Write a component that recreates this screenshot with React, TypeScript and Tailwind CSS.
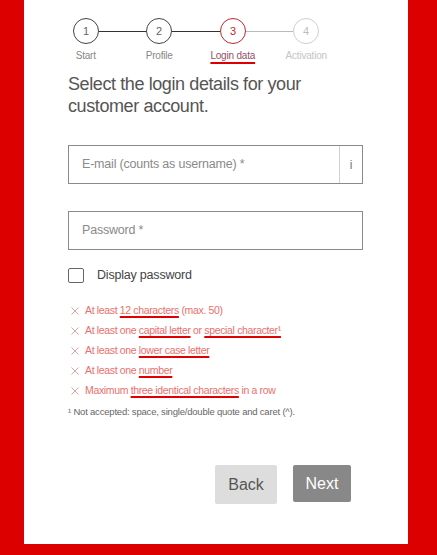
import React from "react";

const steps = [
  { n: "1", label: "Start", state: "done" },
  { n: "2", label: "Profile", state: "done" },
  { n: "3", label: "Login data", state: "active" },
  { n: "4", label: "Activation", state: "todo" },
];

function Circle({ n, state }: { n: string; state: string }) {
  const cls =
    state === "active"
      ? "border-[#c0262c] text-[#c0262c]"
      : state === "todo"
      ? "border-[#cfcfcf] text-[#bdbdbd]"
      : "border-[#444] text-[#666]";
  return (
    <div
      className={`w-[26px] h-[26px] rounded-full border-[1.5px] flex items-center justify-center text-[11px] shrink-0 ${cls}`}
    >
      {n}
    </div>
  );
}

function Link({ children }: { children: React.ReactNode }) {
  return (
    <span className="underline decoration-[#e00000] decoration-[1.5px] underline-offset-[2px]">
      {children}
    </span>
  );
}

function Rule({ children }: { children: React.ReactNode }) {
  return (
    <div className="flex items-center h-[20px]">
      <svg width="8" height="8" viewBox="0 0 8 8" className="ml-[1px] mr-[6px] shrink-0">
        <path d="M0.5 0.5 L7.5 7.5 M7.5 0.5 L0.5 7.5" stroke="#e3a3a3" strokeWidth="1" />
      </svg>
      <span className="text-[#e9706e] text-[10.5px] tracking-[-0.35px]">{children}</span>
    </div>
  );
}

export default function App() {
  return (
    <div
      className="w-[437px] h-[555px] bg-[#dd0000] overflow-hidden"
      style={{ fontFamily: '"Liberation Sans", Arial, sans-serif' }}
    >
      <div className="ml-[24px] w-[384px] h-[544px] bg-white pl-[44px] pr-[45px] pt-[18px]">
        {/* stepper */}
        <div className="flex items-center ml-[5px]">
          <Circle n="1" state="done" />
          <div className="w-[47px] h-px bg-[#333]" />
          <Circle n="2" state="done" />
          <div className="w-[48px] h-px bg-[#333]" />
          <Circle n="3" state="active" />
          <div className="w-[47px] h-px bg-[#bbb]" />
          <Circle n="4" state="todo" />
        </div>
        <div className="flex -ml-[19px] mt-[5px] text-[10px] leading-[14px] tracking-[-0.2px]">
          {steps.map((s) => (
            <div key={s.n} className="w-[73.5px] flex justify-center">
              <span
                className={
                  s.state === "active"
                    ? "text-[#94506a] underline decoration-[#d00] decoration-[1.5px] underline-offset-[3px]"
                    : s.state === "todo"
                    ? "text-[#c4c4c4]"
                    : "text-[#888]"
                }
              >
                {s.label}
              </span>
            </div>
          ))}
        </div>

        <h1 className="mt-[10px] text-[18px] leading-[22px] text-[#555] tracking-[-0.4px]">
          Select the login details for your customer account.
        </h1>

        {/* email */}
        <div className="mt-[28px] flex h-[39px] border border-[#8a8a8a]">
          <div className="flex-1 flex items-center pl-[13px] text-[12.5px] text-[#8a8a8a] tracking-[-0.2px]">
            E-mail (counts as username) *
          </div>
          <div className="w-[23px] border-l border-[#d0d0d0] flex items-center justify-center text-[12px] text-[#777]">
            i
          </div>
        </div>

        {/* password */}
        <div className="mt-[27px] flex h-[39px] border border-[#8a8a8a] items-center pl-[13px] text-[12.5px] text-[#8a8a8a] tracking-[-0.2px]">
          Password *
        </div>

        <div className="mt-[16px] flex items-center">
          <div className="w-[16px] h-[15px] border border-[#666] rounded-[2px]" />
          <span className="ml-[13px] text-[12.5px] text-[#444] tracking-[-0.2px]">Display password</span>
        </div>

        <div className="mt-[16px] pl-[2px]">
          <Rule>
            At least <Link>12 characters</Link> (max. 50)
          </Rule>
          <Rule>
            At least one <Link>capital letter</Link> or <Link>special character¹</Link>
          </Rule>
          <Rule>
            At least one <Link>lower case letter</Link>
          </Rule>
          <Rule>
            At least one <Link>number</Link>
          </Rule>
          <Rule>
            Maximum <Link>three identical characters</Link> in a row
          </Rule>
        </div>
        <div className="mt-[4px] text-[9.5px] text-[#666] tracking-[-0.2px]">
          ¹ Not accepted: space, single/double quote and caret (^).
        </div>

        <div className="mt-[46px] flex pl-[147px] gap-[16px]">
          <button className="w-[62px] h-[39px] bg-[#dddddd] rounded-[2px] text-[16px] text-[#555]">
            Back
          </button>
          <button className="w-[58px] h-[37px] bg-[#888888] rounded-[2px] text-[16px] text-white">
            Next
          </button>
        </div>
      </div>
    </div>
  );
}
